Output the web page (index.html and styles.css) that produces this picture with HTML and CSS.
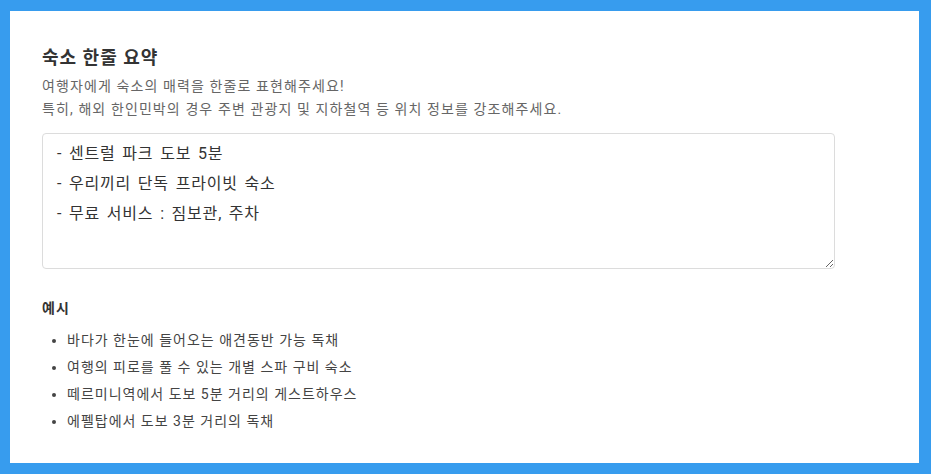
FILE: index.html
```html
<!DOCTYPE html>
<html lang="ko">
<head>
  <meta charset="UTF-8">
  <meta name="viewport" content="width=device-width, initial-scale=1.0">
  <title>숙소 한줄 요약</title>
  <link rel="stylesheet" href="styles.css">
</head>
<body>

  <section class="panel">
    <h2 class="panel-title">숙소 한줄 요약</h2>
    <p class="panel-desc">
      여행자에게 숙소의 매력을 한줄로 표현해주세요!<br>
      특히, 해외 한인민박의 경우 주변 관광지 및 지하철역 등 위치 정보를 강조해주세요.
    </p>

    <textarea class="summary-input">- 센트럴 파크 도보 5분
- 우리끼리 단독 프라이빗 숙소
- 무료 서비스 : 짐보관, 주차</textarea>

    <h3 class="example-title">예시</h3>
    <ul class="example-list">
      <li>바다가 한눈에 들어오는 애견동반 가능 독채</li>
      <li>여행의 피로를 풀 수 있는 개별 스파 구비 숙소</li>
      <li>떼르미니역에서 도보 5분 거리의 게스트하우스</li>
      <li>에펠탑에서 도보 3분 거리의 독채</li>
    </ul>
  </section>

</body>
</html>
```

FILE: styles.css
```css
body {
  margin: 0;
  background-color: #379cee;
  font-family: Roboto, "Noto Sans CJK KR", sans-serif;
  font-feature-settings: "palt";
  color: #333;
}

.panel {
  background-color: white;
  margin: 11px 12px 11px 10px;
  height: 452px;
  box-sizing: border-box;
  padding: 34px 32px 0;
}

.panel-title {
  margin: 0;
  font-size: 18px;
  line-height: 26px;
  font-weight: bold;
  letter-spacing: 1px;
  color: #333;
}

.panel-desc {
  margin: 4px 0 0;
  font-size: 14px;
  line-height: 23px;
  letter-spacing: 1.1px;
  color: #666;
}

.summary-input {
  display: block;
  margin-top: 12px;
  width: 793px;
  height: 136px;
  box-sizing: border-box;
  padding: 5px 14px;
  border: 1px solid #dcdcdc;
  border-radius: 4px;
  font-family: inherit;
  font-feature-settings: "palt";
  font-size: 16px;
  line-height: 30px;
  letter-spacing: 0.8px;
  word-spacing: 2px;
  color: #333;
  outline: none;
}

.example-title {
  margin: 28px 0 0;
  font-size: 14px;
  line-height: 22px;
  font-weight: bold;
  letter-spacing: 1px;
  color: #333;
}

.example-list {
  margin: 8px 0 0;
  padding-left: 25px;
  font-size: 14px;
  line-height: 27px;
  letter-spacing: 1px;
  color: #444;
}
```
